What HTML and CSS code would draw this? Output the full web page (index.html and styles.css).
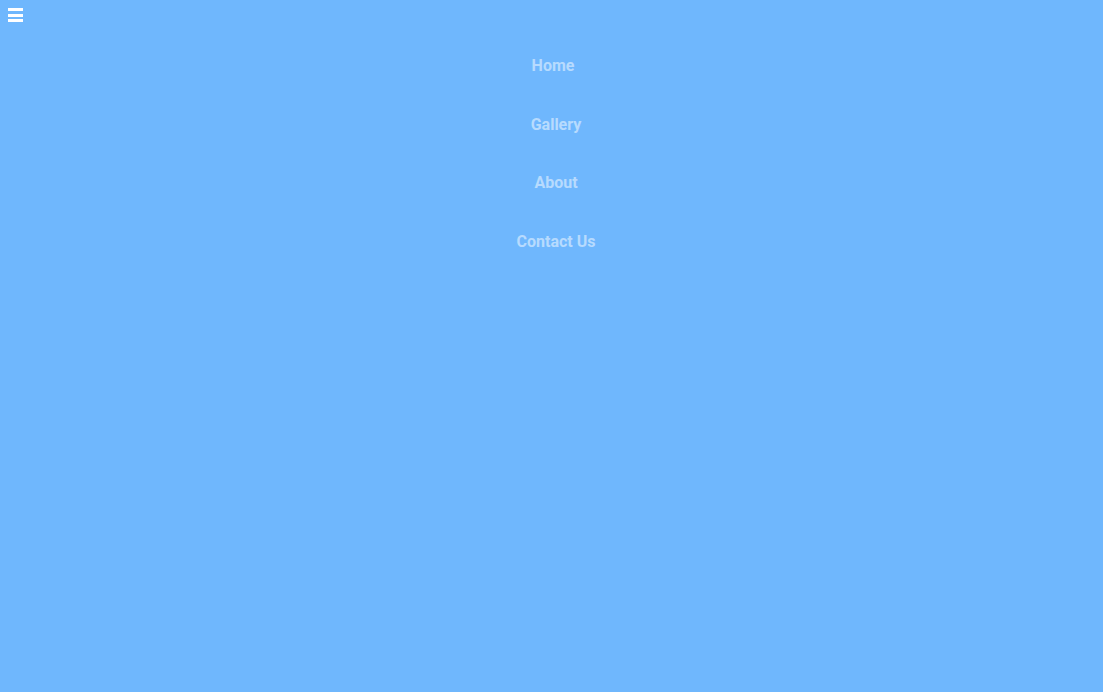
FILE: index.html
```html
<!DOCTYPE html>
<html lang="en">
<head>
<meta charset="utf-8">
<title>Menu</title>
<link rel="stylesheet" href="styles.css">
</head>
<body>
<header class="topbar">
  <button class="menu-toggle" aria-label="Menu">
    <span class="bar"></span>
    <span class="bar"></span>
    <span class="bar"></span>
  </button>
</header>
<nav class="nav">
  <ul class="nav-list">
    <li class="nav-item nav-item--first"><a href="#">Home</a></li>
    <li class="nav-item"><a href="#">Gallery</a></li>
    <li class="nav-item"><a href="#">About</a></li>
    <li class="nav-item"><a href="#">Contact Us</a></li>
  </ul>
</nav>
</body>
</html>
```

FILE: styles.css
```css
html, body {
  margin: 0;
  padding: 0;
  height: 100%;
}
body {
  background: #6fb7fd;
  font-family: Roboto, "Liberation Sans", Arial, sans-serif;
}
.topbar {
  display: flex;
  padding: 8px 0 0 8px;
  height: 14px;
}
.menu-toggle {
  display: flex;
  flex-direction: column;
  gap: 2.5px;
  width: 15px;
  padding: 0;
  margin: 0;
  border: 0;
  background: none;
  cursor: pointer;
}
.bar {
  display: block;
  width: 15px;
  height: 3px;
  background: #ffffff;
}
.nav {
  display: flex;
  justify-content: center;
  padding-left: 9px;
}
.nav-list {
  list-style: none;
  margin: 0;
  padding: 34px 0 0;
  display: flex;
  flex-direction: column;
  align-items: center;
  gap: 38.6px;
}
.nav-item a {
  display: block;
  color: rgba(255, 255, 255, 0.5);
  text-decoration: none;
  font-weight: 700;
  font-size: 16px;
  line-height: 20px;
}
.nav-item--first {
  margin-right: 6px;
}
```
